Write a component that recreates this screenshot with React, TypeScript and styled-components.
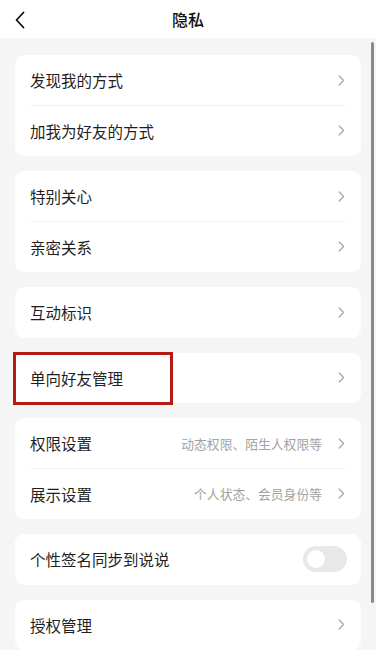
import React from 'react';
import styled, { createGlobalStyle } from 'styled-components';

const GlobalStyle = createGlobalStyle`
  html, body {
    margin: 0;
    padding: 0;
    background: #f5f5f5;
  }
  body {
    font-family: 'Noto Sans CJK SC', 'Noto Sans', sans-serif;
    color: #1a1a1a;
  }
`;

const Page = styled.div`
  position: relative;
  width: 376px;
  min-height: 650px;
  background: #f5f5f5;
  overflow: hidden;
`;

const Header = styled.div`
  position: relative;
  height: 38px;
  background: #ffffff;
  display: flex;
  align-items: center;
  justify-content: center;
`;

const BackButton = styled.div`
  position: absolute;
  left: 13px;
  top: 11px;
  width: 14px;
  height: 18px;
  display: flex;
  align-items: center;
  justify-content: center;
`;

const Title = styled.div`
  font-size: 16px;
  font-weight: 500;
  color: #111;
`;

const List = styled.div`
  display: flex;
  flex-direction: column;
  gap: 15px;
  padding: 17px 15px 0;
`;

const Card = styled.div`
  position: relative;
  background: #ffffff;
  border-radius: 9px;
`;

const Row = styled.div<{ $divider?: boolean }>`
  position: relative;
  height: 50.5px;
  display: flex;
  align-items: center;
  padding: 0 15px;
  &::after {
    content: '';
    display: ${p => (p.$divider ? 'block' : 'none')};
    position: absolute;
    left: 15px;
    right: 15px;
    bottom: 0;
    height: 1px;
    background: #f1f1f1;
  }
`;

const Label = styled.div`
  flex: 1;
  font-size: 15.5px;
  color: #1f1f1f;
`;

const Hint = styled.div`
  font-size: 12.8px;
  color: #a3a3a3;
  margin-right: 16px;
`;

const Chevron = styled.svg`
  width: 7px;
  height: 11px;
  margin-right: 1px;
`;

const Toggle = styled.div`
  width: 44px;
  height: 26px;
  border-radius: 13px;
  background: #e8e8e8;
  display: flex;
  align-items: center;
  padding: 0 3px;
  box-sizing: border-box;
  margin-right: -1px;
`;

const Knob = styled.div`
  width: 18px;
  height: 18px;
  border-radius: 50%;
  background: #ffffff;
  margin-left: 1px;
`;

const Highlight = styled.div`
  position: absolute;
  left: -2px;
  top: -1px;
  width: 160px;
  height: 53px;
  border: 3px solid #b51a15;
  box-sizing: border-box;
  pointer-events: none;
`;

const ScrollBar = styled.div`
  position: absolute;
  left: 371px;
  top: 42px;
  width: 2.5px;
  height: 561px;
  border-radius: 2px;
  background: #8a8a8a;
`;

const Arrow = () => (
  <Chevron viewBox="0 0 7 11">
    <path d="M1.2 1 L5.6 5.5 L1.2 10" fill="none" stroke="#a8a8a8" strokeWidth="1.3" strokeLinecap="round" strokeLinejoin="round" />
  </Chevron>
);

type Item = { label: string; hint?: string; toggle?: boolean };

const groups: Item[][] = [
  [{ label: '发现我的方式' }, { label: '加我为好友的方式' }],
  [{ label: '特别关心' }, { label: '亲密关系' }],
  [{ label: '互动标识' }],
  [{ label: '单向好友管理' }],
  [
    { label: '权限设置', hint: '动态权限、陌生人权限等' },
    { label: '展示设置', hint: '个人状态、会员身份等' },
  ],
  [{ label: '个性签名同步到说说', toggle: true }],
  [{ label: '授权管理' }],
];

const App: React.FC = () => (
  <Page>
    <GlobalStyle />
    <Header>
      <BackButton>
        <svg width="12" height="18" viewBox="0 0 12 18">
          <path d="M9.5 1.5 L2.5 9 L9.5 16.5" fill="none" stroke="#111" strokeWidth="1.8" strokeLinecap="round" strokeLinejoin="round" />
        </svg>
      </BackButton>
      <Title>隐私</Title>
    </Header>
    <List>
      {groups.map((group, gi) => (
        <Card key={gi}>
          {group.map((item, i) => (
            <Row key={item.label} $divider={i < group.length - 1}>
              <Label>{item.label}</Label>
              {item.hint && <Hint>{item.hint}</Hint>}
              {item.toggle ? (
                <Toggle>
                  <Knob />
                </Toggle>
              ) : (
                <Arrow />
              )}
            </Row>
          ))}
          {group[0].label === '单向好友管理' && <Highlight />}
        </Card>
      ))}
    </List>
    <ScrollBar />
  </Page>
);

export default App;
